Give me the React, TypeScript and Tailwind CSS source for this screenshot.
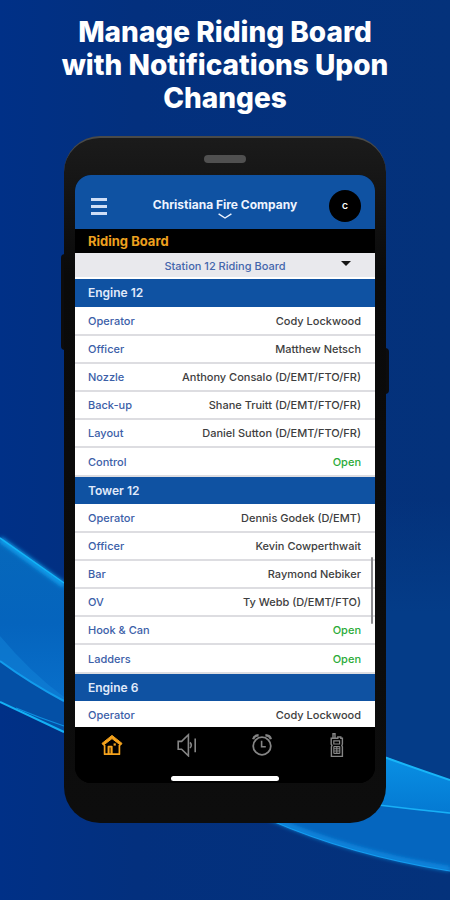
import type { ReactNode } from 'react';
import { clsx } from 'clsx';

interface Seat {
  position: string;
  member: string | null;
}

interface Unit {
  name: string;
  seats: Seat[];
}

const units: Unit[] = [
  {
    name: 'Engine 12',
    seats: [
      { position: 'Operator', member: 'Cody Lockwood' },
      { position: 'Officer', member: 'Matthew Netsch' },
      { position: 'Nozzle', member: 'Anthony Consalo (D/EMT/FTO/FR)' },
      { position: 'Back-up', member: 'Shane Truitt (D/EMT/FTO/FR)' },
      { position: 'Layout', member: 'Daniel Sutton (D/EMT/FTO/FR)' },
      { position: 'Control', member: null },
    ],
  },
  {
    name: 'Tower 12',
    seats: [
      { position: 'Operator', member: 'Dennis Godek (D/EMT)' },
      { position: 'Officer', member: 'Kevin Cowperthwait' },
      { position: 'Bar', member: 'Raymond Nebiker' },
      { position: 'OV', member: 'Ty Webb (D/EMT/FTO)' },
      { position: 'Hook & Can', member: null },
      { position: 'Ladders', member: null },
    ],
  },
  {
    name: 'Engine 6',
    seats: [{ position: 'Operator', member: 'Cody Lockwood' }],
  },
];

function Waves() {
  return (
    <svg
      aria-hidden="true"
      viewBox="0 0 450 900"
      preserveAspectRatio="none"
      className="absolute inset-0 h-full w-full"
    >
      <defs>
        <linearGradient id="sky" x1="0" y1="0" x2="1" y2="0">
          <stop offset="0" stopColor="#003087" />
          <stop offset="0.3" stopColor="#03307e" />
          <stop offset="1" stopColor="#04327b" />
        </linearGradient>
        <linearGradient id="haze" x1="0" y1="0" x2="0" y2="1">
          <stop offset="0" stopColor="#043c88" stopOpacity="0" />
          <stop offset="0.4" stopColor="#043c88" />
          <stop offset="1" stopColor="#043c88" />
        </linearGradient>
        <linearGradient id="leftBand" x1="0" y1="0" x2="0" y2="1">
          <stop offset="0" stopColor="#0668bb" />
          <stop offset="0.45" stopColor="#0564bd" />
          <stop offset="1" stopColor="#0a74d0" />
        </linearGradient>
        <linearGradient id="rightBand" x1="0" y1="0" x2="0" y2="1">
          <stop offset="0" stopColor="#0a93e6" />
          <stop offset="1" stopColor="#0479d2" />
        </linearGradient>
        <filter id="soft" x="-20%" y="-20%" width="140%" height="140%">
          <feGaussianBlur stdDeviation="2" />
        </filter>
      </defs>
      <rect width="450" height="900" fill="url(#sky)" />
      <path d="M370 500H450V780L370 752Z" fill="url(#haze)" />

      <path d="M0 537 L64 583 L110 612 V730 L64 701 Q30 683 0 661Z" fill="url(#leftBand)" />
      <path d="M0 636 Q30 672 64 697 L64 701 Q30 683 0 661Z" fill="#1488dc" opacity="0.45" />
      <path d="M0 661 Q30 683 64 701 L110 730 V755 L64 733 Q30 716 0 702Z" fill="#0450a6" />
      <path d="M0 539 L64 585" stroke="#12a5f2" strokeWidth="5" fill="none" filter="url(#soft)" />
      <path d="M0 538 L64 583" stroke="#14b4f6" strokeWidth="1.5" fill="none" />
      <path d="M0 661 Q30 683 64 701" stroke="#129cec" strokeWidth="2" fill="none" />
      <path d="M0 702 Q30 716 64 732" stroke="#14b0f4" strokeWidth="2" fill="none" />
      <path d="M16 708 Q40 718 64 726" stroke="#0d8fe0" strokeWidth="1.2" fill="none" />

      <path d="M360 748 Q420 770 450 780 V871 Q350 855 270 820 L340 790Z" fill="#0566bf" />
      <path d="M360 748 L386 757 Q420 770 450 780 V814 Q410 809 360 803Z" fill="url(#rightBand)" />
      <path d="M370 752 Q420 770 450 780" stroke="#18b6f8" strokeWidth="2" fill="none" />
      <path d="M370 804 Q410 809 450 813" stroke="#18b0f6" strokeWidth="1.5" fill="none" />
      <path d="M270 818 Q350 853 450 869" stroke="#1292e8" strokeWidth="4" fill="none" filter="url(#soft)" />
      <path d="M270 820 Q350 855 450 871" stroke="#149df0" strokeWidth="1.2" fill="none" />
    </svg>
  );
}

function HomeIcon() {
  return (
    <svg viewBox="0 0 24 24" className="h-6 w-6" fill="none" stroke="currentColor" strokeWidth="1.7" strokeLinejoin="round">
      <path d="M12 2.4 22 10.4 20.6 12.2 12 5.6 3.4 12.2 2 10.4Z" fill="currentColor" strokeWidth="1" />
      <path d="M4.6 12v9.2h14.8V12" />
      <path d="M8.4 21v-7.4h3.4V21" fill="currentColor" fillOpacity="0.5" />
      <path d="M13.6 10.4h2.2v2.2h-2.2Z" fill="currentColor" stroke="none" />
    </svg>
  );
}

function SpeakerIcon() {
  return (
    <svg viewBox="0 0 24 24" className="h-6 w-6" fill="none" stroke="currentColor" strokeWidth="1.6">
      <path d="M3.2 8.4h3.4L13.4 1.8v21L6.6 16.2H3.2Z" />
      <path d="M15 9.4q2.6 2.8 0 5.6" />
      <path d="M20.2 5.4v13.8" />
    </svg>
  );
}

function AlarmIcon() {
  return (
    <svg viewBox="0 0 24 24" className="h-6 w-6" fill="none" stroke="currentColor" strokeWidth="1.8">
      <circle cx="12" cy="13" r="8.8" />
      <path d="M11.6 7.8v6h4.2" strokeWidth="1.6" />
      <path d="M3.2 6.2q.8-3.8 5.4-4M20.8 6.2q-.8-3.8-5.4-4" strokeWidth="2.4" />
    </svg>
  );
}

function RadioIcon() {
  return (
    <svg viewBox="0 0 24 24" className="h-6 w-6" fill="none" stroke="currentColor" strokeWidth="1.4">
      <path d="M8 5V.8h2V5" />
      <path d="M6.2 7.4V5.2h6.6V4h3v1.2h1.6v6l-.6 1.2.6 1.4v9.6H6.4V13.8l.6-1.4-.8-1.2Z" />
      <path d="M8.8 7.8h5.8v3.2H8.8Z" strokeWidth="1.2" />
      <path d="M8.8 13.6h6M8.8 15.8h6M8.8 18h6M8.8 20.4h6M11.8 13.6v6.8M8.8 13.6v6.8M14.8 13.6v6.8" strokeWidth="1.1" />
    </svg>
  );
}

const tabs: { label: string; icon: ReactNode; active?: boolean }[] = [
  { label: 'Home', icon: <HomeIcon />, active: true },
  { label: 'Alerts', icon: <SpeakerIcon /> },
  { label: 'Schedule', icon: <AlarmIcon /> },
  { label: 'Radio', icon: <RadioIcon /> },
];

function AppHeader() {
  return (
    <header className="flex h-[54px] shrink-0 items-center justify-between bg-[#0f52a2] px-3.5 pt-2">
      <button type="button" aria-label="Menu" className="flex w-8 flex-col gap-1 px-0.5">
        <span className="h-[3px] w-4 bg-[#cfdef6]" />
        <span className="h-[3px] w-4 bg-[#cfdef6]" />
        <span className="h-[3px] w-4 bg-[#cfdef6]" />
      </button>
      <button type="button" className="flex flex-col items-center pt-1 text-[12px] leading-4 font-bold text-[#eef4ff]">
        Christiana Fire Company
        <svg viewBox="0 0 14 6" className="h-1.5 w-3.5" fill="none" stroke="currentColor" strokeWidth="1.4">
          <path d="M.6 .8 7 5 13.4 .8" />
        </svg>
      </button>
      <button
        type="button"
        aria-label="Account"
        className="flex h-8 w-8 items-center justify-center rounded-full bg-black text-[8px] font-bold text-white"
      >
        C
      </button>
    </header>
  );
}

function RidingTable() {
  return (
    <div className="relative min-h-0 flex-1 overflow-hidden bg-white">
      <table className="w-full text-[11px] leading-4 font-medium">
        {units.map((unit) => (
          <tbody key={unit.name}>
            <tr>
              <th colSpan={2} scope="rowgroup" className="h-7 bg-[#0f52a2] px-[13px] text-left text-[12px] font-semibold text-[#e0eafa]">
                {unit.name}
              </th>
            </tr>
            {unit.seats.map((seat) => (
              <tr key={seat.position} className="h-7 border-b-2 border-[#dddde1] last:h-[29px]">
                <th scope="row" className="pl-[13px] text-left font-medium text-[#3c60a8]">
                  {seat.position}
                </th>
                <td className={clsx('pr-3.5 text-right', seat.member ? 'text-[#3e3e40]' : 'text-[#2bab38]')}>
                  {seat.member ?? 'Open'}
                </td>
              </tr>
            ))}
          </tbody>
        ))}
      </table>
      {/* scroll thumb */}
      <div className="absolute top-[62%] right-0.5 h-[15%] w-0.5 rounded-full bg-[#8c8c90]" />
    </div>
  );
}

function TabBar() {
  return (
    <nav className="flex h-14 shrink-0 flex-col justify-between bg-black pt-1.5 pb-0.5">
      <div className="grid grid-cols-4 pr-px">
        {tabs.map((tab) => (
          <button
            key={tab.label}
            type="button"
            aria-label={tab.label}
            className={clsx('flex justify-center', tab.active ? 'text-[#f5a31d]' : 'text-[#858585]')}
          >
            {tab.icon}
          </button>
        ))}
      </div>
      <div className="mx-auto h-[5px] w-[108px] rounded-full bg-white" />
    </nav>
  );
}

function Phone() {
  return (
    <div className="relative mx-16 flex min-h-0 flex-1 flex-col">
      {/* side keys */}
      <div className="absolute top-[118px] -left-[3px] h-24 w-2 rounded-l-sm bg-[#0c0c0e]" />
      <div className="absolute top-[212px] -right-[3px] h-[46px] w-2 rounded-r-sm bg-[#0c0c0e]" />

      <div className="relative flex min-h-0 flex-1 flex-col rounded-[36px] border-t-2 border-[#4a4a48] bg-linear-to-b from-[#1b1b1b] via-[#0a0a0a] via-20% to-[#0d0d0d] px-[11px] pb-10">
        <div className="flex h-[37px] shrink-0 justify-center pt-[17px]">
          <div className="h-2 w-[42px] rounded-full bg-[#505050]" />
        </div>
        <main className="flex min-h-0 flex-1 flex-col overflow-hidden rounded-2xl bg-black">
          <AppHeader />
          <h2 className="h-6 shrink-0 bg-black px-[13px] text-[13px] leading-6 font-bold text-[#eda01f]">Riding Board</h2>
          <div className="relative h-[26px] shrink-0 border-b-2 border-white bg-[#e9e9ed]">
            <select
              aria-label="Riding board"
              className="block h-full w-full appearance-none bg-transparent pt-0.5 text-center text-[11px] font-medium text-[#4466ac]"
            >
              <option>Station 12 Riding Board</option>
            </select>
            <svg viewBox="0 0 10 5" className="pointer-events-none absolute top-2 right-6 h-[5px] w-2.5" fill="#161616">
              <path d="M0 0h10L5 5Z" />
            </svg>
          </div>
          <RidingTable />
          <TabBar />
        </main>
      </div>
    </div>
  );
}

export default function App() {
  return (
    <div className="relative h-screen overflow-hidden bg-[#03307e] font-['Inter','Roboto',sans-serif]">
      <Waves />
      <div className="relative flex h-full flex-col pt-4 pb-[77px]">
        <h1 className="mx-auto mb-[21px] max-w-[350px] text-center text-[28px] leading-[33px] font-extrabold text-white">
          Manage Riding Board with Notifications Upon Changes
        </h1>
        <Phone />
      </div>
    </div>
  );
}
